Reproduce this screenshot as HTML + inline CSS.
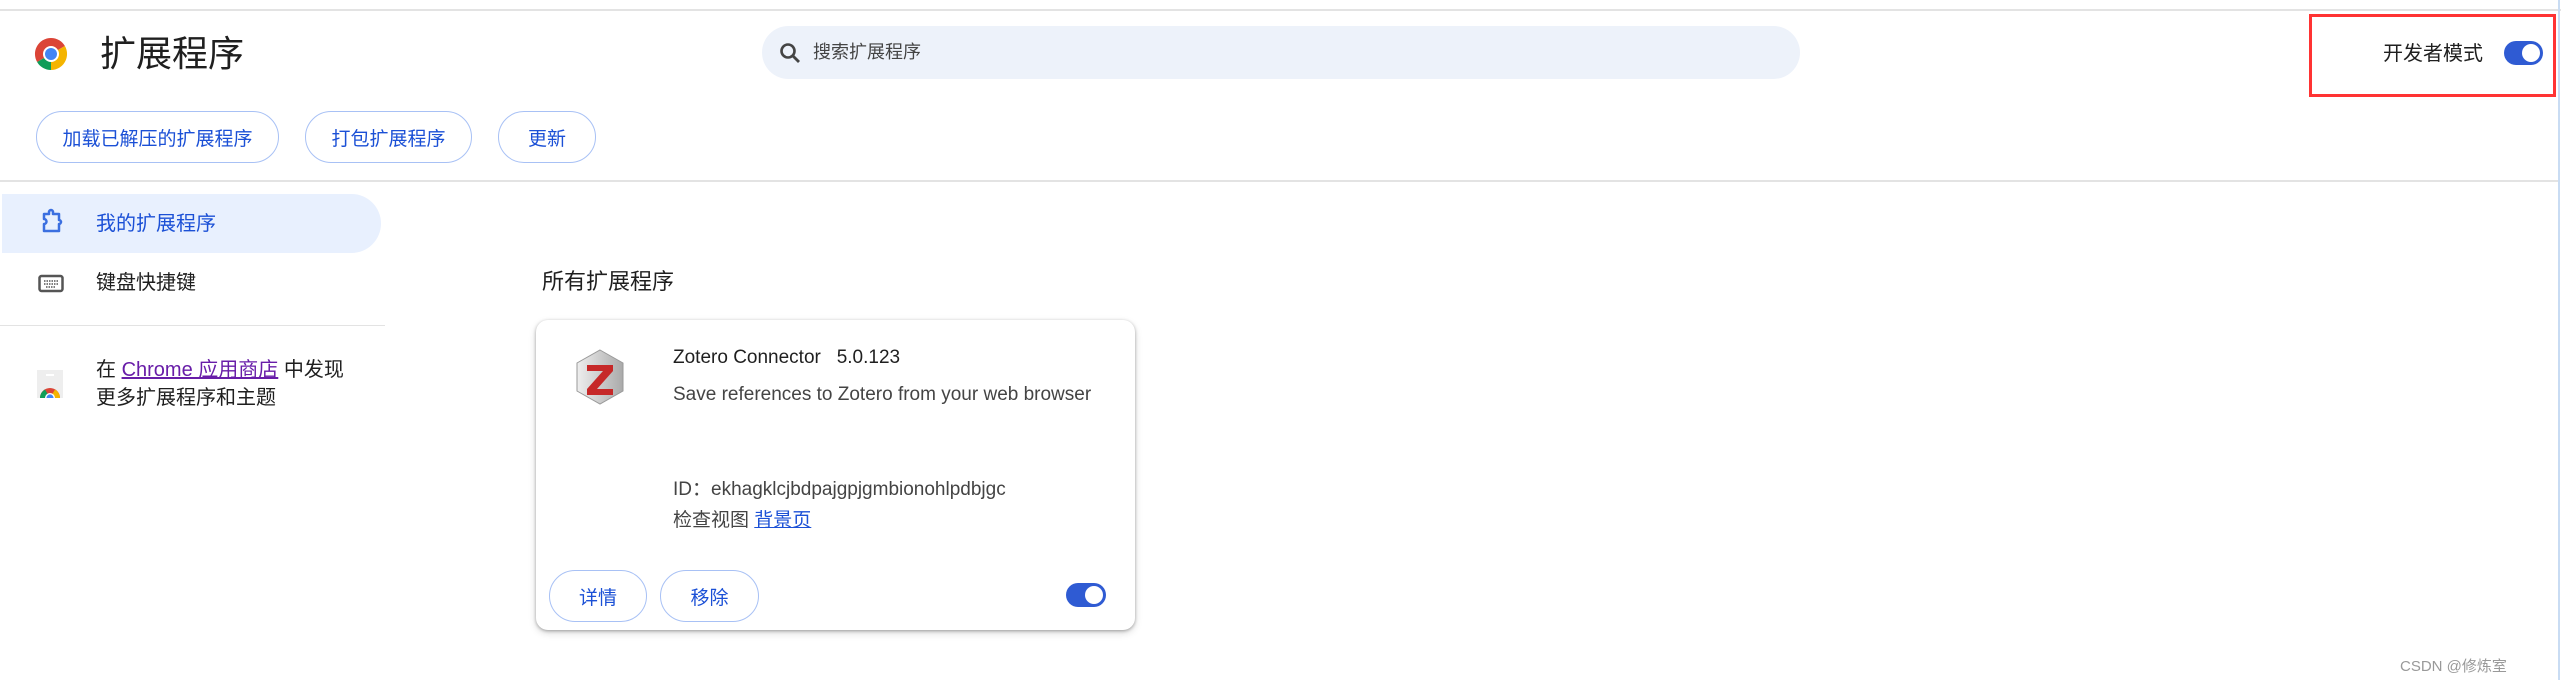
<!DOCTYPE html>
<html><head><meta charset="utf-8"><style>
*{margin:0;padding:0;box-sizing:border-box}
body{width:2561px;height:680px;background:#fff;position:relative;overflow:hidden;font-family:"Liberation Sans","Noto Sans CJK SC",sans-serif;color:#1f1f1f}
.a{position:absolute}
.btn{position:absolute;border:1.5px solid #a8c1f5;border-radius:30px;color:#1b50d6;font-size:19px;display:flex;align-items:center;justify-content:center}
.tog{position:absolute;background:#2f5bd3;border-radius:14px}
.tog::after{content:"";position:absolute;right:3px;top:3px;bottom:3px;aspect-ratio:1;background:#fff;border-radius:50%}
</style></head><body>
<div class="a" style="left:0;top:9px;width:2561px;height:2px;background:#e3e3e3"></div>
<div class="a" style="left:2558px;top:0;width:2px;height:680px;background:#c9dcf3"></div>
<svg class="a" style="left:33px;top:36px" width="36" height="36" viewBox="0 0 36 36">
<path d="M18 18 L18 2 A16 16 0 0 1 31.9 10 Z" fill="#db4437"/>
<path d="M18 2 A16 16 0 0 0 4.1 26 L18 18 Z" fill="#db4437"/>
<path d="M4.1 26 A16 16 0 0 0 18 34 L31.9 10 A16 16 0 0 1 18 18 Z" fill="#0f9d58"/>
<path d="M31.9 10 A16 16 0 0 1 18 34 L18 18 Z" fill="#f4b400"/>
<circle cx="18" cy="18" r="8" fill="#fff"/><circle cx="18" cy="18" r="6" fill="#4285f4"/></svg>
<div class="a" style="left:100px;top:32px;font-size:36px;line-height:44px">扩展程序</div>
<div class="a" style="left:762px;top:26px;width:1038px;height:53px;border-radius:27px;background:#edf2fa"></div>
<svg class="a" style="left:778px;top:41px" width="24" height="24" viewBox="0 0 24 24"><circle cx="10" cy="10" r="6.5" fill="none" stroke="#444" stroke-width="2.6"/><path d="M15 15 L21 21" stroke="#444" stroke-width="2.8"/></svg>
<div class="a" style="left:813px;top:40px;font-size:18px;line-height:24px;color:#444">搜索扩展程序</div>
<div class="a" style="left:2309px;top:14px;width:247px;height:83px;border:3px solid #f33"></div>
<div class="a" style="left:2383px;top:41px;font-size:20px;line-height:26px">开发者模式</div>
<div class="tog" style="left:2504px;top:41px;width:39px;height:24px"></div>
<div class="btn" style="left:36px;top:111px;width:243px;height:52px">加载已解压的扩展程序</div>
<div class="btn" style="left:305px;top:111px;width:167px;height:52px">打包扩展程序</div>
<div class="btn" style="left:498px;top:111px;width:98px;height:52px">更新</div>
<div class="a" style="left:0;top:180px;width:2558px;height:2px;background:#e3e3e3"></div>
<div class="a" style="left:2px;top:194px;width:379px;height:59px;background:#e8f0fe;border-radius:0 30px 30px 0"></div>
<svg class="a" style="left:40px;top:208px" width="24" height="28" viewBox="0 0 24 28"><path d="M4 6 H9 V4 A2 2 0 0 1 13 4 V6 H19 V12 A2 2 0 0 1 19 16 V23 H4 V16 A2.5 2.5 0 0 0 4 11 Z" fill="none" stroke="#3b6fe0" stroke-width="2.5" stroke-linejoin="round"/></svg>
<div class="a" style="left:96px;top:211px;font-size:20px;line-height:26px;color:#1b50d6">我的扩展程序</div>
<svg class="a" style="left:38px;top:274px" width="26" height="20" viewBox="0 0 26 20"><rect x="1.5" y="2" width="23" height="15" rx="2" fill="none" stroke="#555" stroke-width="2.5"/><path d="M6 7h14M6 10h14M8 13h10" stroke="#555" stroke-width="1.6" stroke-dasharray="1.5 1"/></svg>
<div class="a" style="left:96px;top:270px;font-size:20px;line-height:26px">键盘快捷键</div>
<div class="a" style="left:0;top:325px;width:385px;height:1px;background:#e3e3e3"></div>
<svg class="a" style="left:37px;top:370px" width="26" height="28" viewBox="0 0 26 28"><rect x="0" y="0" width="26" height="28" fill="#eee"/><rect x="9" y="4" width="8" height="2" fill="#fff"/><path d="M3 28 A10 10 0 0 1 23 28 Z" fill="#db4437"/><path d="M3 28 A10 10 0 0 1 8 19.5 L13 28Z" fill="#0f9d58"/><path d="M23 28 A10 10 0 0 0 18 19.5 L13 28Z" fill="#f4b400"/><circle cx="13" cy="28" r="5" fill="#fff"/><circle cx="13" cy="28" r="3.6" fill="#4285f4"/></svg>
<div class="a" style="left:96px;top:356px;font-size:20px;line-height:28px">在 <span style="color:#681da8;text-decoration:underline">Chrome 应用商店</span> 中发现<br>更多扩展程序和主题</div>
<div class="a" style="left:542px;top:268px;font-size:22px;line-height:28px">所有扩展程序</div>
<div class="a" style="left:536px;top:320px;width:599px;height:310px;border-radius:12px;background:#fff;box-shadow:0 1px 3px rgba(0,0,0,.3),0 3px 8px rgba(0,0,0,.15)"></div>
<svg class="a" style="left:575px;top:349px" width="50" height="56" viewBox="0 0 50 56"><defs><linearGradient id="g" x1="0" x2="1"><stop offset="0" stop-color="#eee"/><stop offset="1" stop-color="#aaa"/></linearGradient></defs><path d="M25 1 L48 14 V42 L25 55 L2 42 V14 Z" fill="url(#g)" stroke="#999"/><path d="M12 16 H38 V22 L22 40 H38 V46 H12 V40 L28 22 H12 Z" fill="#c62828"/></svg>
<div class="a" style="left:673px;top:346px;font-size:19px;line-height:24px">Zotero Connector&nbsp;&nbsp;&nbsp;5.0.123</div>
<div class="a" style="left:673px;top:383px;font-size:19px;line-height:24px;color:#444">Save references to Zotero from your web browser</div>
<div class="a" style="left:673px;top:478px;font-size:19px;line-height:24px;color:#444">ID：ekhagklcjbdpajgpjgmbionohlpdbjgc</div>
<div class="a" style="left:673px;top:509px;font-size:19px;line-height:24px;color:#444">检查视图 <span style="color:#1b50d6;text-decoration:underline">背景页</span></div>
<div class="btn" style="left:549px;top:570px;width:98px;height:52px">详情</div>
<div class="btn" style="left:660px;top:570px;width:99px;height:52px">移除</div>
<div class="tog" style="left:1066px;top:583px;width:40px;height:24px"></div>
<div class="a" style="left:2400px;top:655px;font-size:15px;color:#999">CSDN @修炼室</div>
</body></html>
